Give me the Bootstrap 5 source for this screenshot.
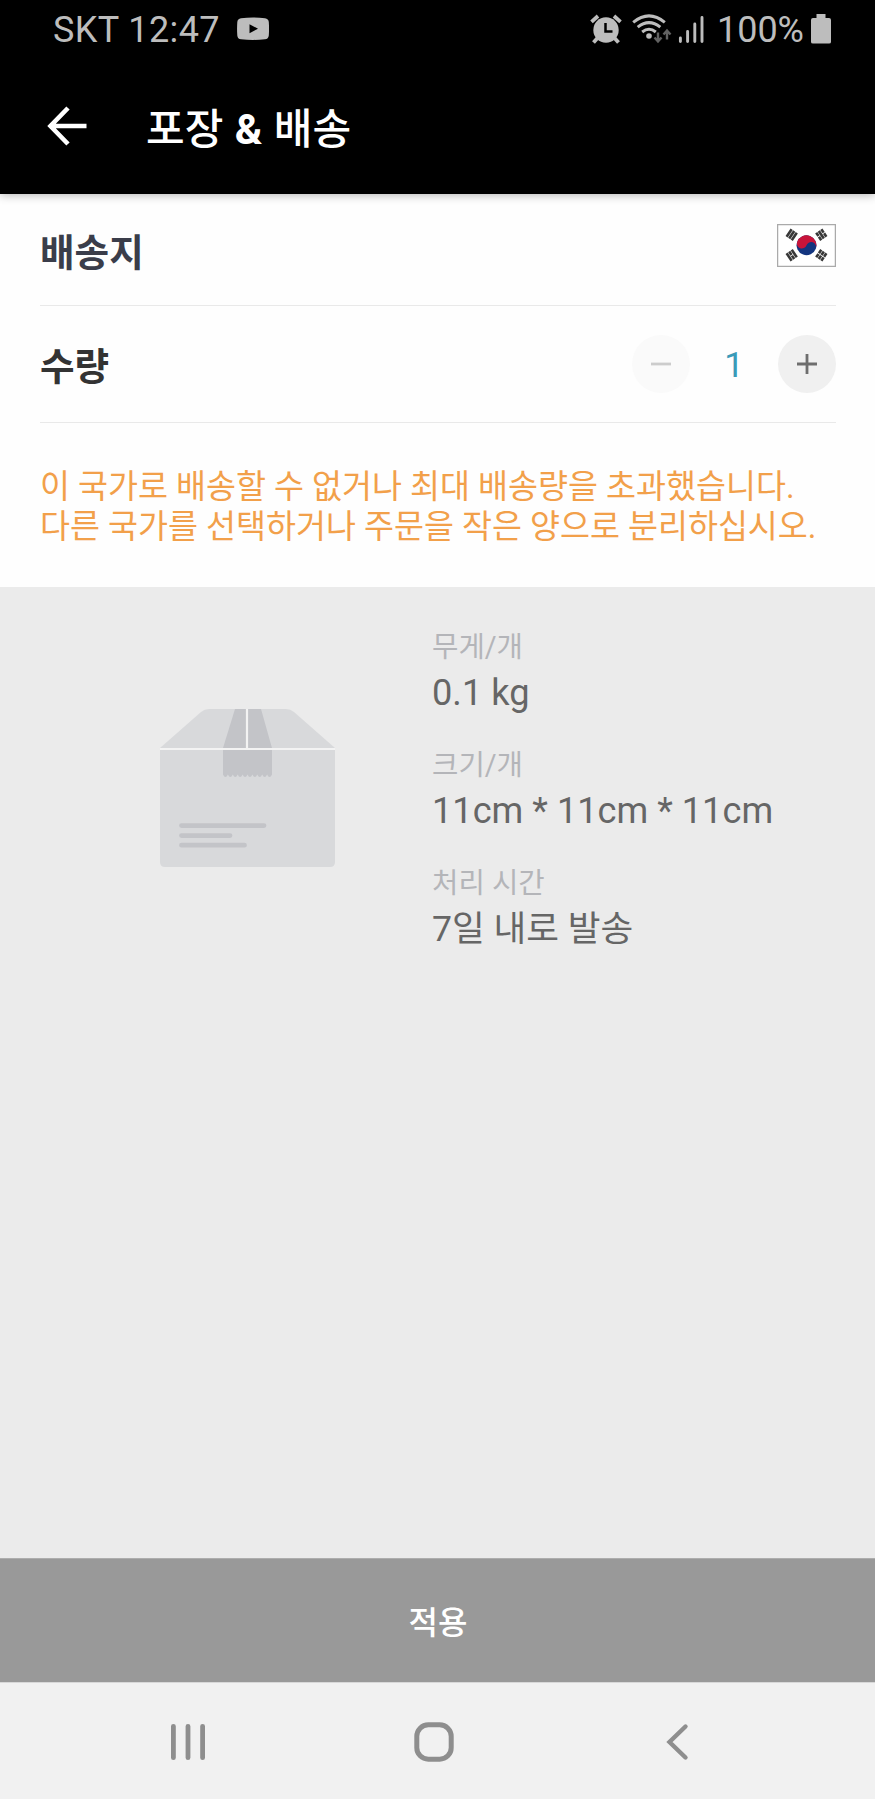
<!DOCTYPE html>
<html lang="ko">
<head>
<meta charset="utf-8">
<meta name="viewport" content="width=device-width, initial-scale=1">
<title>포장 &amp; 배송</title>
<link rel="stylesheet" href="https://cdn.jsdelivr.net/npm/bootstrap@5.3.0/dist/css/bootstrap.min.css">
<style>
  body { font-family: Roboto, "Noto Sans CJK KR", sans-serif; background: #ebebeb; color: #666; }
  svg { display: block; flex: none; }
  .screen { height: 1799px; overflow: hidden; }
  .topbar { height: 194px; background: #000; box-shadow: 0 1px 9px rgba(0,0,0,.3); z-index: 1; }
  .status { height: 58px; padding: 0 44px 0 53px; color: #bdbdbd; font-size: 36px; line-height: 58px; }
  .status span { padding-top: 2px; }
  .carrier { letter-spacing: .4px; }
  .appbar { height: 136px; padding: 0 0 0 47px; color: #fff; }
  .appbar h1 { font-size: 42px; line-height: 60px; margin: 0 0 0 58px; padding-top: 7px; font-weight: 500; }
  .appbar b { font-weight: 700; margin: 0 1px; }
  .sheet { height: 393px; background: #fefefe; padding: 0 39px 0 40px; }
  .line { border-bottom: 1px solid #e9e9e9; }
  .dest { height: 112px; }
  .qty { height: 117px; }
  .field { font-size: 37.6px; line-height: 50px; padding-top: 6px; font-weight: 700; }
  .round { width: 58px; height: 58px; border: 0; background: #f0f0f0; }
  .round:disabled { background: #fafafa; }
  .count { width: 88px; color: #3a9ab8; font-size: 35px; line-height: 58px; padding-top: 3px; }
  .warn { color: #f2a04a; font-size: 32.6px; line-height: 39.7px; margin: 45px 0 0; white-space: nowrap; }
  .info { padding: 38px 0 0 160px; }
  .facts { margin: 0 0 0 97px; }
  .facts dt { font-size: 28.7px; line-height: 44px; font-weight: 400; color: #b4b5b9; }
  .facts dd { font-size: 36.2px; line-height: 46px; margin: 0 0 28px; padding-top: 1px; height: 46px; white-space: nowrap; }
  .facts .lead-time { font-size: 35.6px; }
  .apply { height: 124px; background: #999; border: 0; border-top: 1px solid #adadad; color: #fff; font-size: 32px; font-weight: 500; }
  .apply span { display: block; padding: 5px 0 0 1px; }
  .softkeys { height: 117px; background: #f1f1f1; border-top: 1px solid #d8d8d8; padding: 2px 186px 0 171px; }
</style>
</head>
<body>
<div class="screen d-flex flex-column">
  <header class="topbar position-relative flex-shrink-0">
    <div class="status d-flex align-items-center">
      <span class="carrier">SKT 12:47</span>
      <svg style="margin-left:17px" width="32" height="24" viewBox="0 0 32 24"><path fill="#bdbdbd" fill-rule="evenodd" d="M4 1.2Q16-.2 28 1.2Q31.5 1.6 31.8 5Q32.3 12 31.8 18.500Q31.400 22 28 22.300Q16 23.500 4 22.300Q.6 22 .3 18.500Q-.2 12 .3 5Q.6 1.600 4 1.200ZM12.500 7.200V16.200L21 11.700Z"/></svg>
      <div class="d-flex align-items-center ms-auto">
        <svg width="32" height="30" viewBox="0 0 32 30"><g fill="none" stroke="#bdbdbd" stroke-width="3.800"><path d="M1.500 7.800L8 2M30.500 7.800L24 2M7.500 24L3.500 28.500M24.500 24L28.500 28.500"/></g><circle cx="16" cy="16" r="12.700" fill="#bdbdbd"/><path d="M15.500 9V17.500H22.500" fill="none" stroke="#000" stroke-width="2.500"/></svg>
        <svg style="margin-left:10px" width="40" height="30" viewBox="0 0 40 30"><g fill="none" stroke="#bdbdbd" stroke-width="3"><path d="M1.200 8.300Q17 -4.500 32.800 8.300M5.700 13.200Q17 4 28.300 13.200M10.200 18Q17 12.500 23.800 18"/></g><circle cx="17" cy="22" r="2.800" fill="#bdbdbd"/><path d="M26 18.500V27M22.500 23.500L26 27.500L29.500 23.500M35 25.500V17M31.500 20.500L35 16.500L38.500 20.500" fill="none" stroke="#626262" stroke-width="2.400"/></svg>
        <svg style="margin-left:6px" width="28" height="30" viewBox="0 0 28 30"><path d="M2.400 24V27.500M9.600 17.500V27.500M16.800 10V27.500M24 3.500V27.500" fill="none" stroke="#bdbdbd" stroke-width="2.900" stroke-linecap="round"/></svg>
        <span style="margin-left:11px">100%</span>
        <svg style="margin-left:7px" width="20" height="30" viewBox="0 0 20 30"><path fill="#bdbdbd" d="M5.500 0h9v4H18q2 0 2 2V28q0 1.500-2 1.500H2Q0 29.500 0 28V6q0-2 2-2h3.500z"/></svg>
      </div>
    </div>
    <div class="appbar d-flex align-items-center">
      <svg width="41" height="40" viewBox="0 0 41 40"><path d="M21 2L3.500 20L21 38M3.500 20H39.500" fill="none" stroke="#fff" stroke-width="4.600"/></svg>
      <h1>포장 <b>&amp;</b> 배송</h1>
    </div>
  </header>

  <section class="sheet flex-shrink-0">
    <div class="dest line d-flex align-items-center justify-content-between">
      <span class="field" style="color:#3a3d4a">배송지</span>
      <svg class="mb-2" width="59" height="43" viewBox="0 0 59 43">
        <rect x=".6" y=".6" width="57.800" height="41.800" fill="#fff" stroke="#aaa" stroke-width="1.300"/>
        <g transform="translate(29.500 21.300)">
          <g transform="rotate(20)"><circle r="9.900" fill="#13357f"/><path fill="#c8143a" d="M-9.900 0A9.900 9.900 0 0 1 9.900 0A4.950 4.950 0 0 0 0 0A4.950 4.950 0 0 1 -9.900 0Z"/></g>
          <g fill="none" stroke="#383838" stroke-width="2.600">
            <g transform="translate(-14.800 -10.600) rotate(-56)"><path d="M-4.500-3.100H4.500M-4.500 0H4.500M-4.500 3.100H4.500"/></g>
            <g transform="translate(14.800 -10.600) rotate(56)"><path d="M-4.500-3.100H-.4M.4-3.100H4.500M-4.500 0H4.500M-4.500 3.100H-.4M.4 3.100H4.500"/></g>
            <g transform="translate(-14.800 10) rotate(56)"><path d="M-4.500-3.100H4.500M-4.500 0H-.4M.4 0H4.500M-4.500 3.100H4.500"/></g>
            <g transform="translate(14.800 10) rotate(-56)"><path d="M-4.500-3.100H-.4M.4-3.100H4.500M-4.500 0H-.4M.4 0H4.500M-4.500 3.100H-.4M.4 3.100H4.500"/></g>
          </g>
        </g>
      </svg>
    </div>
    <div class="qty line d-flex align-items-center justify-content-between">
      <span class="field" style="color:#333">수량</span>
      <div class="d-flex align-items-center">
        <button class="round rounded-circle p-0 d-flex align-items-center justify-content-center" disabled aria-label="빼기"><svg width="20" height="20"><path d="M0 10H20" stroke="#ccc" stroke-width="2.800"/></svg></button>
        <span class="count text-center">1</span>
        <button class="round rounded-circle p-0 d-flex align-items-center justify-content-center" aria-label="더하기"><svg width="20" height="20"><path d="M0 10H20M10 0V20" stroke="#6e6e6e" stroke-width="2.800"/></svg></button>
      </div>
    </div>
    <p class="warn">이 국가로 배송할 수 없거나 최대 배송량을 초과했습니다.<br>다른 국가를 선택하거나 주문을 작은 양으로 분리하십시오.</p>
  </section>

  <section class="info d-flex align-items-start flex-grow-1">
    <svg style="margin-top:84px" width="175" height="158" viewBox="0 0 175 158">
      <path fill="#d8d9db" d="M0 39L41 3Q44.500 0 49 0H126Q130.500 0 134 3L175 39Z"/>
      <path fill="#d8d9db" d="M0 39H175V153Q175 158 170 158H5Q0 158 0 153Z"/>
      <path fill="#c3c4c8" d="M75 0H101L112 39H63Z"/>
      <path fill="#c3c4c8" d="M63 41H112V65.500q-2.450 5-4.900 0q-2.450 5-4.900 0q-2.450 5-4.900 0q-2.450 5-4.900 0q-2.450 5-4.900 0q-2.450 5-4.900 0q-2.450 5-4.900 0q-2.450 5-4.900 0q-2.450 5-4.900 0q-2.450 5-4.900 0Z"/>
      <path d="M0 40H175M87 0V40" stroke="#f3f3f3" stroke-width="2.200"/>
      <path d="M21.500 116.600H104M21.500 126.600H70M21.500 136.200H84.500" stroke="#c3c4c8" stroke-width="4.800" stroke-linecap="round"/>
    </svg>
    <dl class="facts">
      <dt>무게/개</dt><dd>0.1 kg</dd>
      <dt>크기/개</dt><dd>11cm * 11cm * 11cm</dd>
      <dt>처리 시간</dt><dd class="lead-time">7일 내로 발송</dd>
    </dl>
  </section>

  <button class="apply w-100 flex-shrink-0 p-0"><span>적용</span></button>
  <nav class="softkeys d-flex align-items-center justify-content-between flex-shrink-0">
    <svg width="34" height="40" viewBox="0 0 34 40"><path d="M2.400 4.300V35.700M17 4.300V35.700M31.600 4.300V35.700" stroke="#8e8e8e" stroke-width="4.800" stroke-linecap="round"/></svg>
    <svg class="me-1" width="40" height="40" viewBox="0 0 40 40"><rect x="2.800" y="2.800" width="34.400" height="34.400" rx="11.500" fill="none" stroke="#8e8e8e" stroke-width="5"/></svg>
    <svg width="23" height="40" viewBox="0 0 23 40"><path d="M19.500 4.500L3.500 20L19.500 35.500" fill="none" stroke="#8e8e8e" stroke-width="4.400" stroke-linecap="round"/></svg>
  </nav>
</div>
<script src="https://cdn.jsdelivr.net/npm/bootstrap@5.3.0/dist/js/bootstrap.bundle.min.js"></script>
</body>
</html>
